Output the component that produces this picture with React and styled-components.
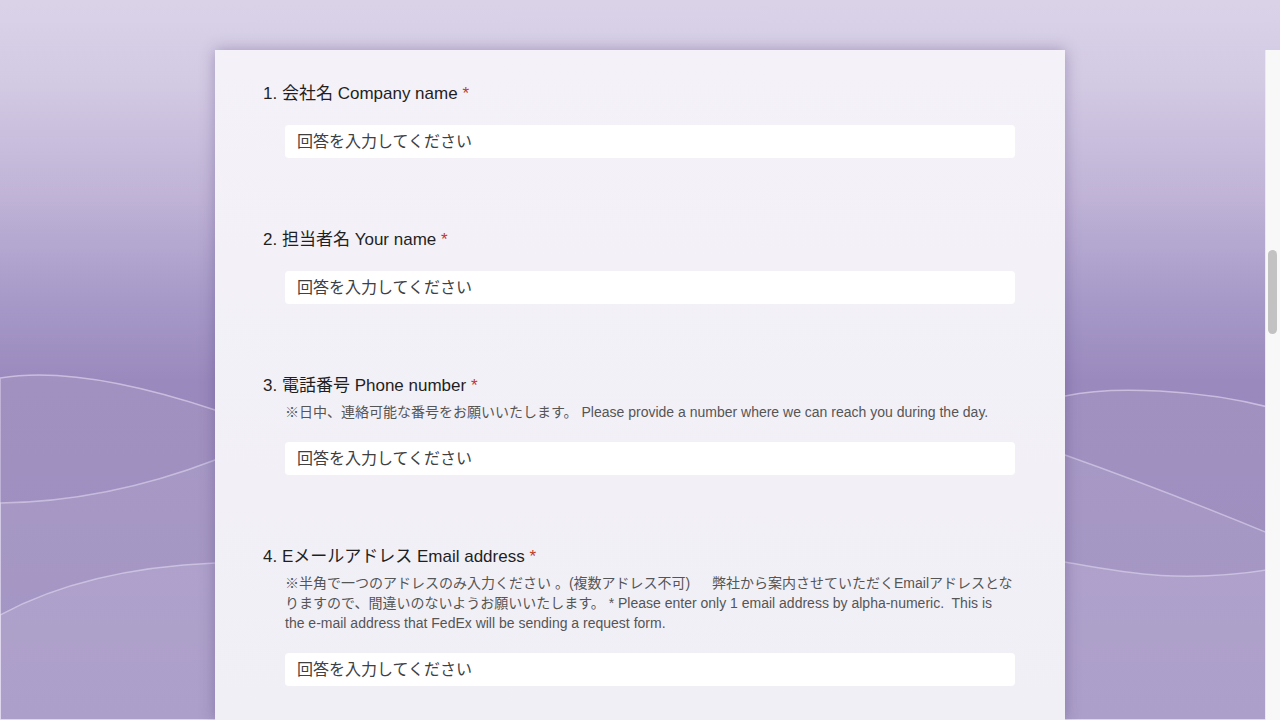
import React from "react";
import styled, { createGlobalStyle } from "styled-components";

const GlobalStyle = createGlobalStyle`
  html, body {
    margin: 0;
    padding: 0;
    overflow: hidden;
  }
  * {
    box-sizing: border-box;
  }
`;

const Page = styled.div`
  position: relative;
  width: 100vw;
  height: 100vh;
  overflow: hidden;
  background: linear-gradient(
    180deg,
    #dad3e8 0%,
    #d2c9e3 12%,
    #bfb2d6 28%,
    #a699c8 42%,
    #9a89bd 53%,
    #9585ba 100%
  );
  font-family: "Liberation Sans", "Noto Sans CJK JP", sans-serif;
`;

// decorative wave art sitting under the form
const Backdrop = styled.svg`
  position: absolute;
  inset: 0;
  width: 100%;
  height: 100%;
  z-index: 0;
`;

const Layout = styled.div`
  position: relative;
  z-index: 1;
  height: 100%;
  display: flex;
  flex-direction: column;
  padding-top: 50px;
`;

const Body = styled.div`
  flex: 1;
  display: flex;
  min-height: 0;
`;

const Main = styled.main`
  flex: 1;
  padding-left: 15px;
  display: flex;
  justify-content: center;
  min-height: 0;
`;

const Card = styled.section`
  width: 850px;
  height: 100%;
  background: linear-gradient(180deg, #f4f2f8 0%, #f1eff6 100%);
  box-shadow: 0 0 14px rgba(70, 50, 110, 0.35);
  padding: 32px 50px 0 48px;
`;

const Question = styled.div`
  margin-bottom: 70px;
`;

const Title = styled.div`
  font-size: 17px;
  line-height: 24px;
  color: #1f1f1f;
`;

const Required = styled.span`
  color: #c0392b;
`;

const Description = styled.p`
  margin: 4px 0 0 22px;
  padding-bottom: 1px;
  font-size: 14px;
  line-height: 20px;
  color: #555555;
`;

const Field = styled.input`
  display: block;
  margin: 19px 0 0 22px;
  width: calc(100% - 22px);
  height: 33px;
  border: none;
  border-radius: 4px;
  background: #ffffff;
  padding: 0 12px;
  font-family: "Liberation Sans", "Noto Sans CJK JP", sans-serif;
  font-size: 16px;
  color: #333333;
  outline: none;

  &::placeholder {
    color: #404040;
  }
`;

const ScrollTrack = styled.div`
  width: 15px;
  background: #f8f8f8;
  border-left: 1px solid #ebebeb;
  padding: 200px 2px 0 2px;
`;

const ScrollThumb = styled.div`
  width: 9px;
  height: 84px;
  border-radius: 5px;
  background: #c2c2c2;
`;

const questions = [
  { no: 1, label: "会社名 Company name" },
  { no: 2, label: "担当者名 Your name" },
  {
    no: 3,
    label: "電話番号 Phone number",
    desc: [
      "※日中、連絡可能な番号をお願いいたします。 Please provide a number where we can reach you during the day.",
    ],
  },
  {
    no: 4,
    label: "Eメールアドレス Email address",
    desc: [
      "※半角で一つのアドレスのみ入力ください 。(複数アドレス不可)\u3000\u00a0 弊社から案内させていただくEmailアドレスとな",
      "りますので、間違いのないようお願いいたします。 * Please enter only 1 email address by alpha-numeric.\u00a0 This is",
      "the e-mail address that FedEx will be sending a request form.",
    ],
  },
];

const Waves = () => (
  <Backdrop viewBox="0 0 1280 720" preserveAspectRatio="none">
    <path
      d="M0,378 C60,368 140,385 215,410 C400,470 900,440 1065,396 C1110,386 1200,388 1280,410 L1280,720 L0,720 Z"
      fill="rgba(255,255,255,0.07)"
      stroke="rgba(236,230,248,0.55)"
      strokeWidth="1.5"
    />
    <path
      d="M0,503 C80,502 150,485 215,460 C400,390 850,380 1065,455 C1130,478 1200,505 1280,538 L1280,720 L0,720 Z"
      fill="rgba(255,255,255,0.08)"
      stroke="rgba(236,230,248,0.5)"
      strokeWidth="1.5"
    />
    <path
      d="M0,615 C50,588 120,567 215,563 C500,555 900,540 1065,562 C1120,572 1180,585 1280,568 L1280,720 L0,720 Z"
      fill="rgba(255,255,255,0.1)"
      stroke="rgba(236,230,248,0.5)"
      strokeWidth="1.5"
    />
  </Backdrop>
);

const App = () => {
  return (
    <Page>
      <GlobalStyle />
      <Waves />
      <Layout>
        <Body>
          <Main>
            <Card>
              {questions.map((q) => (
                <Question key={q.no}>
                  <Title>
                    {q.no}. {q.label} <Required>*</Required>
                  </Title>
                  {q.desc && (
                    <Description>
                      {q.desc.map((line, i) => (
                        <React.Fragment key={i}>
                          {i > 0 && <br />}
                          {line}
                        </React.Fragment>
                      ))}
                    </Description>
                  )}
                  <Field placeholder="回答を入力してください" />
                </Question>
              ))}
            </Card>
          </Main>
          <ScrollTrack>
            <ScrollThumb />
          </ScrollTrack>
        </Body>
      </Layout>
    </Page>
  );
};

export default App;
